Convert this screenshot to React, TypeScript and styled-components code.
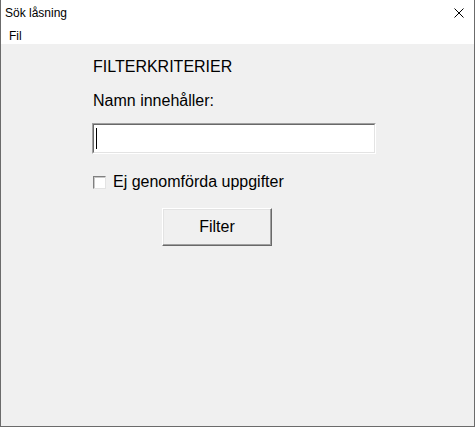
import React from "react";
import styled, { createGlobalStyle } from "styled-components";

const GlobalStyle = createGlobalStyle`
  html, body {
    margin: 0;
    padding: 0;
    background: #ffffff;
  }
  * {
    box-sizing: border-box;
  }
`;

const Window = styled.div`
  width: 475px;
  height: 427px;
  display: flex;
  flex-direction: column;
  border: 1px solid #6b6b6b;
  border-top: none;
  font-family: "Liberation Sans", Arial, sans-serif;
  color: #000;
`;

const TitleBar = styled.div`
  height: 24px;
  background: #ffffff;
  display: flex;
  align-items: center;
  justify-content: space-between;
  padding: 2px 10px 0 4px;
  font-size: 12px;
`;

const MenuBar = styled.div`
  height: 20px;
  background: #ffffff;
  display: flex;
  align-items: center;
  padding: 3px 0 0 8px;
  font-size: 12px;
`;

const Content = styled.div`
  flex: 1;
  background: #f0f0f0;
  display: flex;
  flex-direction: column;
  align-items: flex-start;
  padding: 14px 0 0 91px;
  font-size: 16px;
`;

const Label = styled.div<{ $gap?: number }>`
  line-height: 18px;
  margin-top: ${(p) => p.$gap ?? 0}px;
  padding-left: 1px;
`;

const TextBox = styled.div`
  margin-top: 13px;
  width: 284px;
  height: 31px;
  background: #ffffff;
  border-top: 1px solid #a0a0a0;
  border-left: 1px solid #a0a0a0;
  border-right: 1px solid #ffffff;
  border-bottom: 1px solid #ffffff;
  display: flex;
`;

const TextBoxInner = styled.div`
  flex: 1;
  border-top: 1px solid #696969;
  border-left: 1px solid #696969;
  border-right: 1px solid #e3e3e3;
  border-bottom: 1px solid #e3e3e3;
  display: flex;
  align-items: center;
  padding-left: 2px;
`;

const Caret = styled.span`
  width: 1px;
  height: 21px;
  background: #000;
`;

const CheckRow = styled.label`
  margin-top: 19px;
  display: flex;
  align-items: center;
  gap: 7px;
  line-height: 18px;
  padding-left: 1px;
`;

const CheckBox = styled.span`
  width: 13px;
  height: 13px;
  background: #ffffff;
  border-top: 1px solid #808080;
  border-left: 1px solid #808080;
  border-right: 1px solid #e3e3e3;
  border-bottom: 1px solid #e3e3e3;
  box-shadow: inset 1px 1px 0 #c8c8c8;
`;

const Button = styled.button`
  margin: 17px 0 0 70px;
  width: 110px;
  height: 38px;
  background: #f0f0f0;
  border-top: 1px solid #ffffff;
  border-left: 1px solid #ffffff;
  border-right: 1px solid #696969;
  border-bottom: 1px solid #696969;
  box-shadow: inset -1px -1px 0 #a0a0a0, inset 1px 1px 0 #e3e3e3;
  font-family: "Liberation Sans", Arial, sans-serif;
  font-size: 16px;
  color: #000;
  padding: 0;
`;

const CloseIcon = () => (
  <svg width="10" height="10" viewBox="0 0 10 10">
    <path d="M0.5 0.5 L9.5 9.5 M9.5 0.5 L0.5 9.5" stroke="#000" strokeWidth="1" />
  </svg>
);

export default function App() {
  return (
    <>
      <GlobalStyle />
      <Window>
        <TitleBar>
          <span>Sök låsning</span>
          <CloseIcon />
        </TitleBar>
        <MenuBar>Fil</MenuBar>
        <Content>
          <Label>FILTERKRITERIER</Label>
          <Label $gap={16}>Namn innehåller:</Label>
          <TextBox>
            <TextBoxInner>
              <Caret />
            </TextBoxInner>
          </TextBox>
          <CheckRow>
            <CheckBox />
            Ej genomförda uppgifter
          </CheckRow>
          <Button>Filter</Button>
        </Content>
      </Window>
    </>
  );
}
